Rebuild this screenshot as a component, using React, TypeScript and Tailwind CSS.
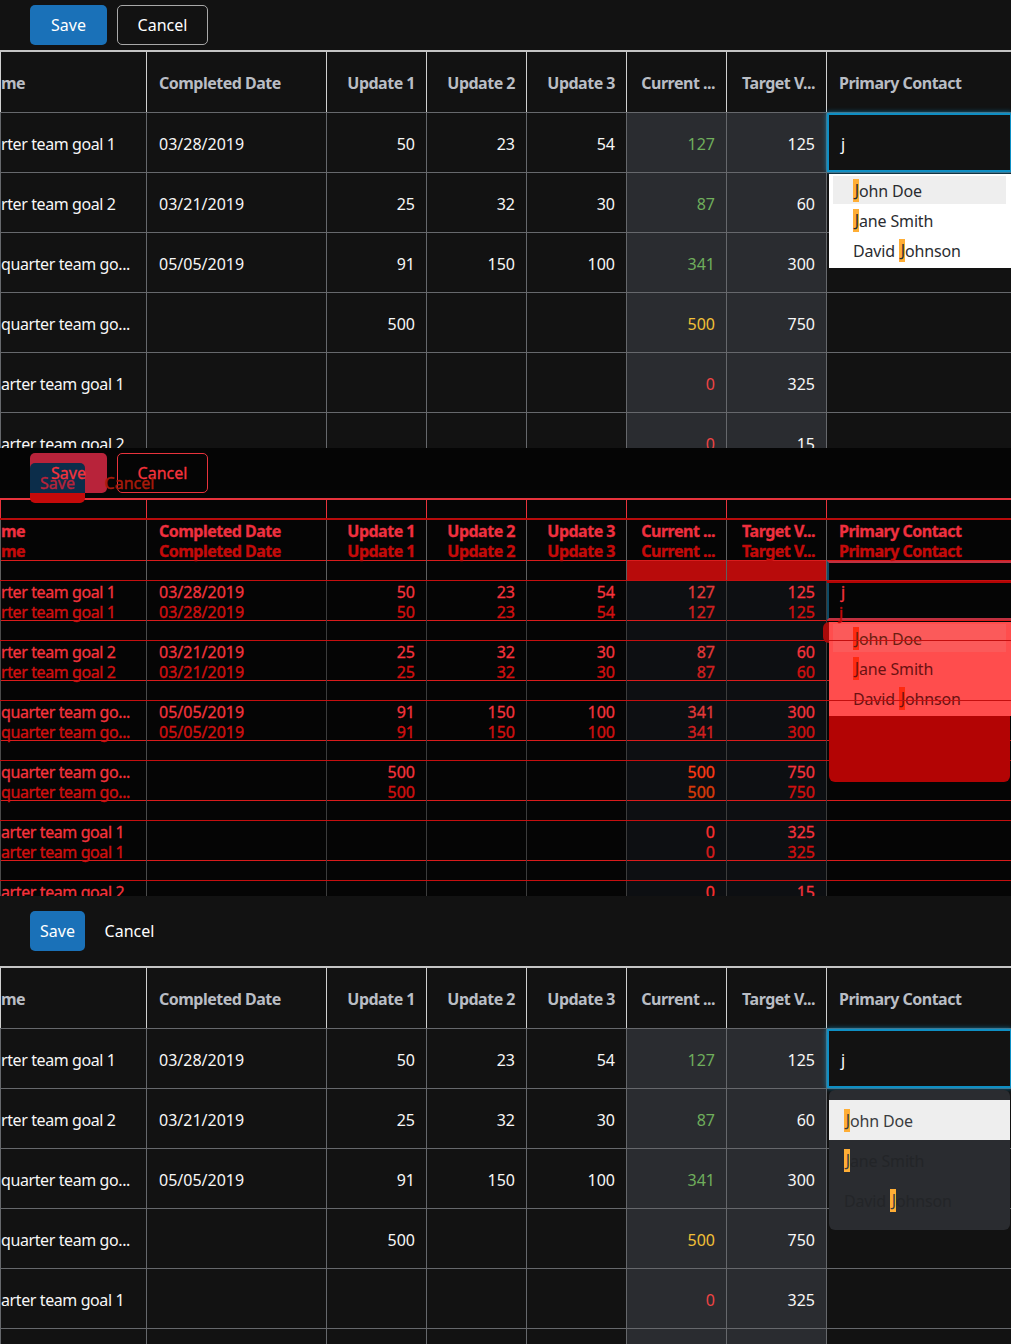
import React from 'react';

type Skin = 'plain' | 'old' | 'new';
type Row = { name: string; date: string; u1: string; u2: string; u3: string; current: string; level: 'good' | 'warn' | 'bad'; target: string };

const ROWS: Row[] = [
  { name: 'rter team goal 1', date: '03/28/2019', u1: '50', u2: '23', u3: '54', current: '127', level: 'good', target: '125' },
  { name: 'rter team goal 2', date: '03/21/2019', u1: '25', u2: '32', u3: '30', current: '87', level: 'good', target: '60' },
  { name: 'quarter team go...', date: '05/05/2019', u1: '91', u2: '150', u3: '100', current: '341', level: 'good', target: '300' },
  { name: 'quarter team go...', date: '', u1: '500', u2: '', u3: '', current: '500', level: 'warn', target: '750' },
  { name: 'arter team goal 1', date: '', u1: '', u2: '', u3: '', current: '0', level: 'bad', target: '325' },
  { name: 'arter team goal 2', date: '', u1: '', u2: '', u3: '', current: '0', level: 'bad', target: '15' },
];

const CONTACTS = [
  { before: '', after: 'ohn Doe' },
  { before: '', after: 'ane Smith' },
  { before: 'David ', after: 'ohnson' },
];

const COLUMNS = 'grid grid-cols-[147px_180px_100px_100px_100px_100px_100px_185px] w-[1011px]';

const SKINS = {
  plain: {
    page: 'bg-[#121212]',
    top: 'border-t-2 border-[#c4c4c4]',
    rowLine: 'border-b border-[#66686c]',
    headLine: 'border-r border-[#d0d0d0]',
    bodyLine: 'border-r border-[#66686c]',
    edge: 'border-l border-[#66686c]',
    head: 'text-[#b9bdc4]',
    body: 'text-[#f7f7f7]',
    band: 'bg-[#2a2c30]',
    firstBand: 'bg-[#2a2c30]',
    good: 'text-[#6fae5c]',
    warn: 'text-[#f2c037]',
    bad: 'text-[#ef4444]',
    save: 'bg-[#1a71b8] text-white',
    saveText: '',
    cancel: 'border border-[#a8a8a8] text-white',
    cancelBare: 'text-white',
    input: 'border-2 border-[#0e8fc4] shadow-[0_0_5px_#0e8fc4] bg-[#121212]',
    inputText: 'text-white',
  },
  old: {
    page: 'bg-[#050505] [-webkit-text-stroke:0.3px_currentColor]',
    top: 'border-t-2 border-[#e8333c]',
    rowLine: 'border-b border-[#d91c1c]',
    headLine: 'border-r border-[#e8333c]',
    bodyLine: 'border-r border-[#d91c1c]',
    edge: 'border-l border-[#e8333c]',
    head: 'text-[#f0303f]',
    body: 'text-[#f6333c]',
    band: 'bg-[#0d0f12]',
    firstBand: 'bg-[linear-gradient(to_bottom,#b80b0b_19px,#0d0f12_19px)]',
    good: 'text-[#e23a3a]',
    warn: 'text-[#ff3a14]',
    bad: 'text-[#ff3030]',
    save: 'bg-[#b8233a] text-[#f6333c]',
    saveText: 'relative z-10',
    cancel: 'border border-[#e8333c] text-[#f6333c]',
    cancelBare: 'text-[#f6333c]',
    input: 'border-y-2 border-y-[#c03040] border-l-2 border-l-[#0d4a66]',
    inputText: 'text-[#f6333c]',
  },
  new: {
    page: '[-webkit-text-stroke:0.4px_currentColor]',
    top: 'border-t-2 border-[#b80b0b]',
    rowLine: 'border-b border-[#c40f0f]',
    headLine: 'border-r border-[#5f5f5f]',
    bodyLine: 'border-r border-[#3c3c3c]',
    edge: 'border-l border-[#4a4a4a]',
    head: 'text-[#c40a0a]',
    body: 'text-[#cf1010]',
    band: '',
    firstBand: '',
    good: 'text-[#cf2020]',
    warn: 'text-[#d83a0a]',
    bad: 'text-[#d81c1c]',
    save: 'bg-[linear-gradient(to_bottom,#0c2d4a_30px,#c40a0a_30px)] text-[#b8233a]',
    saveText: '',
    cancel: 'text-[#a81a0a]',
    cancelBare: 'text-[#a81a0a]',
    input: 'border-t-2 border-t-[#b30404]',
    inputText: 'text-[#c40a0a]',
  },
};

const Highlight: React.FC<{ index: number; tone: string; markTone: string }> = ({ index, tone, markTone }) => {
  const parts = CONTACTS[index];
  return (
    <span className={`flex items-center whitespace-pre pt-[1px] tracking-[-0.15px] ${tone}`}>
      {parts.before}
      <span className={`inline-block h-[23px] w-[6px] text-right leading-[23px] ${markTone}`}>J</span>
      {parts.after}
    </span>
  );
};

const HeaderRow: React.FC<{ skin: Skin }> = ({ skin }) => {
  const s = SKINS[skin];
  const titles = ['Update 1', 'Update 2', 'Update 3', 'Current ...', 'Target V...'];
  return (
    <div className={`${COLUMNS} h-[61px] font-bold tracking-[-0.5px] ${s.head} ${s.rowLine}`}>
      <div className={`flex items-center overflow-hidden whitespace-nowrap pt-[1px] ${s.headLine} ${s.edge}`}>me</div>
      <div className={`flex items-center px-3 pt-[1px] ${s.headLine}`}>Completed Date</div>
      {titles.map((title) => (
        <div key={title} className={`flex items-center justify-end whitespace-nowrap pr-[11px] pt-[1px] ${s.headLine}`}>
          {title}
        </div>
      ))}
      <div className="flex items-center whitespace-nowrap px-3 pt-[1px]">Primary Contact</div>
    </div>
  );
};

const DataRow: React.FC<{ row: Row; index: number; skin: Skin }> = ({ row, index, skin }) => {
  const s = SKINS[skin];
  const num = `flex items-center justify-end pr-[11px] pt-[3px] ${s.bodyLine}`;
  const band = index === 0 ? s.firstBand : s.band;
  return (
    <div className={`${COLUMNS} h-[60px] ${s.body} ${s.rowLine}`}>
      <div className={`flex items-center overflow-hidden whitespace-nowrap pt-[3px] tracking-[-0.4px] ${s.bodyLine} ${s.edge}`}>{row.name}</div>
      <div className={`flex items-center px-3 pt-[3px] ${s.bodyLine}`}>{row.date}</div>
      <div className={num}>{row.u1}</div>
      <div className={num}>{row.u2}</div>
      <div className={num}>{row.u3}</div>
      <div className={`${num} ${band} ${s[row.level]}`}>{row.current}</div>
      <div className={`${num} ${band}`}>{row.target}</div>
      {index === 0 && (
        <div className={`flex items-center px-3 pt-[3px] ${s.input} ${s.inputText}`}>j</div>
      )}
    </div>
  );
};

const BeforeMenu: React.FC<{ skin: Skin }> = ({ skin }) => {
  const old = skin === 'old';
  return (
    <div className={`absolute left-[829px] top-[174px] flex h-[94px] w-[182px] flex-col py-[2px] pl-[4px] pr-[5px] font-['Noto_Sans',sans-serif] ${old ? 'bg-[#ff4d4d]' : 'bg-white'}`}>
      <div className={`flex h-[28px] items-center pl-[20px] ${old ? 'bg-[#fb5a5a]' : 'bg-[#eeeeee]'}`}>
        <Highlight index={0} tone={old ? 'text-[#6a2010]' : 'text-[#2a2c30]'} markTone={old ? 'bg-[#ff2a10]' : 'bg-[#ffae35]'} />
      </div>
      {[1, 2].map((i) => (
        <div key={i} className="mt-[2px] flex h-[28px] items-center pl-[20px]">
          <Highlight index={i} tone={old ? 'text-[#6a1212]' : 'text-[#2a2c30]'} markTone={old ? 'bg-[#ff2a10]' : 'bg-[#ffae35]'} />
        </div>
      ))}
    </div>
  );
};

const AfterMenu: React.FC = () => (
  <div className="absolute left-[829px] top-[194px] w-[181px] rounded-md bg-[#2a2c30] py-[10px] font-['Noto_Sans',sans-serif]">
    {[0, 1, 2].map((i) => (
      <div key={i} className={`flex h-[40px] items-center px-[15px] ${i === 0 ? 'bg-[#eeeeee]' : ''}`}>
        <Highlight index={i} tone={i === 0 ? 'text-[#3a3c40]' : 'text-[#232528]'} markTone="h-[20px] bg-[#ffae35] text-[#3a3c40]" />
      </div>
    ))}
  </div>
);

// one copy of the grid with its toolbar; the "after" copy sits 20px lower
const Sheet: React.FC<{ skin: Skin; after?: boolean }> = ({ skin, after }) => {
  const s = SKINS[skin];
  return (
    <div className={`font-['Noto_Sans',sans-serif] text-[16px] ${s.page}`}>
      <div className={`flex items-start gap-[10px] pl-[30px] ${after ? 'h-[70px] pt-[15px]' : 'h-[50px] pt-[5px]'}`}>
        <div className={`flex h-[40px] items-center justify-center rounded-[5px] ${after ? 'w-[55px]' : 'w-[77px]'} ${s.save}`}>
          <span className={s.saveText}>Save</span>
        </div>
        {after ? (
          <div className={`flex h-[40px] w-[69px] items-center justify-center ${s.cancelBare}`}>Cancel</div>
        ) : (
          <div className={`flex h-[40px] w-[91px] items-center justify-center rounded-[5px] ${s.cancel}`}>Cancel</div>
        )}
      </div>
      <div className={s.top}>
        <HeaderRow skin={skin} />
        {ROWS.map((row, i) => (
          <DataRow key={i} row={row} index={i} skin={skin} />
        ))}
      </div>
    </div>
  );
};

const Frame: React.FC<{ children: React.ReactNode }> = ({ children }) => (
  <div className="relative h-[448px] w-[1011px] overflow-hidden">{children}</div>
);

export default function App() {
  return (
    <div className="w-[1011px]">
      <Frame>
        <Sheet skin="plain" />
        <BeforeMenu skin="plain" />
      </Frame>
      <Frame>
        <Sheet skin="old" />
        <BeforeMenu skin="old" />
        <div className="absolute inset-0">
          <Sheet skin="new" after />
          <div className="absolute left-[823px] top-[174px] h-[21px] w-[6px] rounded-l-full bg-[#a80a0a]" />
          <div className="absolute left-[829px] top-[268px] h-[66px] w-[181px] rounded-b-md bg-[#b30404]" />
        </div>
      </Frame>
      <Frame>
        <Sheet skin="plain" after />
        <AfterMenu />
      </Frame>
    </div>
  );
}
